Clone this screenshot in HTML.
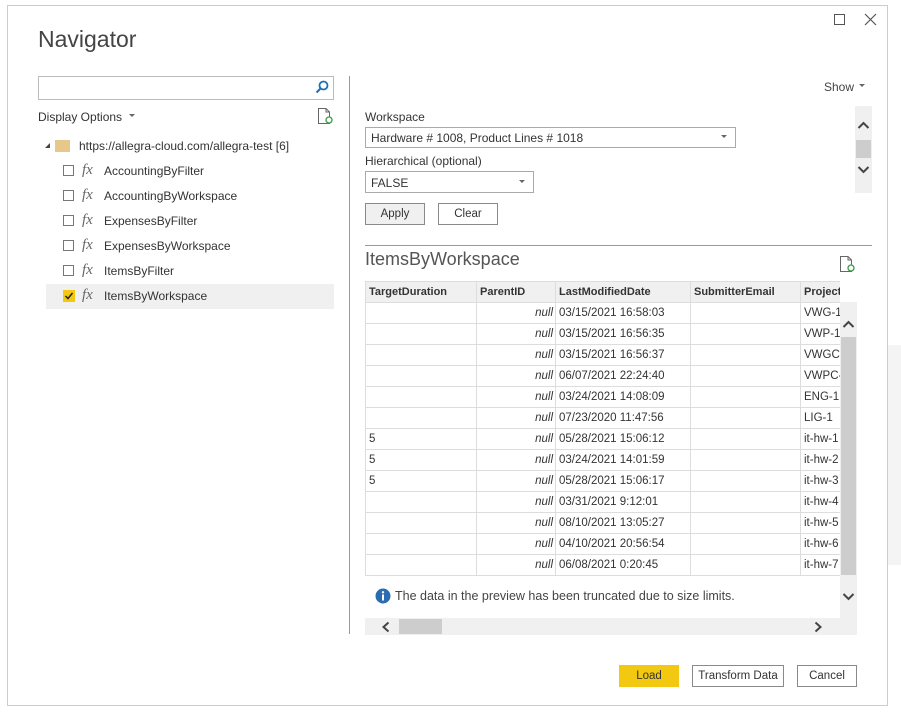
<!DOCTYPE html>
<html><head><meta charset="utf-8"><style>
*{margin:0;padding:0;box-sizing:border-box}
body{width:901px;height:719px;background:#fff;position:relative;overflow:hidden;font-family:"Liberation Sans",sans-serif;font-size:12px;color:#333}
.a{position:absolute}
.cb{position:absolute;width:11px;height:11px;border:1.5px solid #777;background:#fff}
.fx{position:absolute;font-family:"Liberation Serif",serif;font-style:italic;font-size:15px;color:#666}
.it{position:absolute;font-size:12px;color:#333}
.btn{position:absolute;height:22px;border:1px solid #8a8a8a;background:#fff;text-align:center;line-height:20px;font-size:11.5px;color:#333}
table{border-collapse:collapse;table-layout:fixed}
td,th{border:1px solid #ddd;height:21px;padding:0 3px;font-size:11.5px;white-space:nowrap;overflow:hidden;text-align:left;color:#333}
th{background:#f0f0f0;font-weight:bold;font-size:11px}
td.n{text-align:right;font-style:italic;padding-right:2px}
</style></head><body>
<div class="a" style="left:888px;top:345px;width:13px;height:220px;background:#f4f4f4"></div>
<div class="a" style="left:7px;top:5px;width:881px;height:701px;border:1px solid #ccc;background:#fff"></div>
<div class="a" style="left:38px;top:26px;font-size:23px;color:#444">Navigator</div>
<div class="a" style="left:834px;top:14px;width:11px;height:11px;border:1px solid #555"></div>
<svg class="a" style="left:864px;top:13px" width="13" height="13"><path d="M1 1L12 12M12 1L1 12" stroke="#555" stroke-width="1.2"/></svg>
<div class="a" style="left:38px;top:76px;width:296px;height:24px;border:1px solid #bbb"></div>
<svg class="a" style="left:315px;top:80px" width="14" height="15"><circle cx="8.5" cy="5.5" r="4" fill="none" stroke="#1e6fb5" stroke-width="1.8"/><path d="M5.5 8.5L1.5 12.5" stroke="#1e6fb5" stroke-width="2"/></svg>
<div class="a" style="left:38px;top:110px;font-size:12px;color:#333">Display Options</div>
<div class="a" style="left:129px;top:114px;border:3px solid transparent;border-top:3px solid #666"></div>
<svg class="a" style="left:317px;top:107px" width="17" height="18"><path d="M1.5 1.5H9L12.5 5V16.5H1.5Z" fill="none" stroke="#666"/><path d="M9 1.5V5H12.5" fill="none" stroke="#666"/><circle cx="12" cy="13" r="3" fill="#fff" stroke="#3a9a4a" stroke-width="1.3"/></svg>
<div class="a" style="left:45px;top:143px;border-left:5px solid transparent;border-bottom:5px solid #444"></div>
<div class="a" style="left:55px;top:140px;width:15px;height:12px;background:#e8c88a"></div>
<div class="it" style="left:79px;top:139px">https://allegra-cloud.com/allegra-test [6]</div>
<div class="a" style="left:46px;top:284px;width:288px;height:25px;background:#f0f0f0"></div>
<div class="cb" style="left:63px;top:165px"></div><div class="fx" style="left:82px;top:162px">fx</div><div class="it" style="left:104px;top:164px">AccountingByFilter</div>
<div class="cb" style="left:63px;top:190px"></div><div class="fx" style="left:82px;top:187px">fx</div><div class="it" style="left:104px;top:189px">AccountingByWorkspace</div>
<div class="cb" style="left:63px;top:215px"></div><div class="fx" style="left:82px;top:212px">fx</div><div class="it" style="left:104px;top:214px">ExpensesByFilter</div>
<div class="cb" style="left:63px;top:240px"></div><div class="fx" style="left:82px;top:237px">fx</div><div class="it" style="left:104px;top:239px">ExpensesByWorkspace</div>
<div class="cb" style="left:63px;top:265px"></div><div class="fx" style="left:82px;top:262px">fx</div><div class="it" style="left:104px;top:264px">ItemsByFilter</div>
<div class="a" style="left:63px;top:290px;width:12px;height:12px;background:#f2c811"></div>
<svg class="a" style="left:63px;top:290px" width="12" height="12"><path d="M2.5 6L5 8.5L9.5 3" fill="none" stroke="#222" stroke-width="1.5"/></svg>
<div class="fx" style="left:82px;top:287px">fx</div><div class="it" style="left:104px;top:289px">ItemsByWorkspace</div>

<div class="a" style="left:349px;top:76px;width:1px;height:558px;background:#999"></div>
<div class="a" style="left:824px;top:80px;font-size:12px;color:#444">Show</div>
<div class="a" style="left:859px;top:84px;border:3px solid transparent;border-top:3px solid #666"></div>

<div class="a" style="left:365px;top:110px;font-size:12px">Workspace</div>
<div class="a" style="left:365px;top:127px;width:371px;height:21px;border:1px solid #aaa"></div>
<div class="a" style="left:371px;top:131px;font-size:12px">Hardware # 1008, Product Lines # 1018</div>
<div class="a" style="left:721px;top:135px;border:3px solid transparent;border-top:3px solid #666"></div>
<div class="a" style="left:365px;top:154px;font-size:12px">Hierarchical (optional)</div>
<div class="a" style="left:365px;top:171px;width:169px;height:22px;border:1px solid #aaa"></div>
<div class="a" style="left:371px;top:176px;font-size:12px">FALSE</div>
<div class="a" style="left:519px;top:180px;border:3px solid transparent;border-top:3px solid #666"></div>
<div class="btn" style="left:365px;top:203px;width:60px;background:#f0f0f0">Apply</div>
<div class="btn" style="left:438px;top:203px;width:60px">Clear</div>
<div class="a" style="left:855px;top:106px;width:17px;height:87px;background:#f0f0f0"></div>
<div class="a" style="left:856px;top:140px;width:15px;height:18px;background:#cdcdcd"></div>
<svg class="a" style="left:857px;top:120px" width="13" height="10"><path d="M1.5 8L6.5 3L11.5 8" fill="none" stroke="#444" stroke-width="2"/></svg>
<svg class="a" style="left:857px;top:165px" width="13" height="10"><path d="M1.5 2L6.5 7L11.5 2" fill="none" stroke="#444" stroke-width="2"/></svg>

<div class="a" style="left:365px;top:245px;width:507px;height:1px;background:#999"></div>
<div class="a" style="left:365px;top:249px;font-size:18px;color:#555">ItemsByWorkspace</div>
<svg class="a" style="left:839px;top:255px" width="17" height="18"><path d="M1.5 1.5H9L12.5 5V16.5H1.5Z" fill="none" stroke="#666"/><path d="M9 1.5V5H12.5" fill="none" stroke="#666"/><circle cx="12" cy="13" r="3" fill="#fff" stroke="#3a9a4a" stroke-width="1.3"/></svg>

<div class="a" style="left:365px;top:281px;width:475px;height:295px;overflow:hidden">
<table style="width:520px"><colgroup><col style="width:111px"><col style="width:79px"><col style="width:135px"><col style="width:110px"><col style="width:85px"></colgroup>
<tr><th>TargetDuration</th><th>ParentID</th><th>LastModifiedDate</th><th>SubmitterEmail</th><th>ProjectSpecific</th></tr>
<tr><td></td><td class="n">null</td><td>03/15/2021 16:58:03</td><td></td><td>VWG-1</td></tr>
<tr><td></td><td class="n">null</td><td>03/15/2021 16:56:35</td><td></td><td>VWP-1</td></tr>
<tr><td></td><td class="n">null</td><td>03/15/2021 16:56:37</td><td></td><td>VWGC-1</td></tr>
<tr><td></td><td class="n">null</td><td>06/07/2021 22:24:40</td><td></td><td>VWPC-1</td></tr>
<tr><td></td><td class="n">null</td><td>03/24/2021 14:08:09</td><td></td><td>ENG-1</td></tr>
<tr><td></td><td class="n">null</td><td>07/23/2020 11:47:56</td><td></td><td>LIG-1</td></tr>
<tr><td>5</td><td class="n">null</td><td>05/28/2021 15:06:12</td><td></td><td>it-hw-1</td></tr>
<tr><td>5</td><td class="n">null</td><td>03/24/2021 14:01:59</td><td></td><td>it-hw-2</td></tr>
<tr><td>5</td><td class="n">null</td><td>05/28/2021 15:06:17</td><td></td><td>it-hw-3</td></tr>
<tr><td></td><td class="n">null</td><td>03/31/2021 9:12:01</td><td></td><td>it-hw-4</td></tr>
<tr><td></td><td class="n">null</td><td>08/10/2021 13:05:27</td><td></td><td>it-hw-5</td></tr>
<tr><td></td><td class="n">null</td><td>04/10/2021 20:56:54</td><td></td><td>it-hw-6</td></tr>
<tr><td></td><td class="n">null</td><td>06/08/2021 0:20:45</td><td></td><td>it-hw-7</td></tr>
</table></div>
<div class="a" style="left:840px;top:302px;width:17px;height:316px;background:#f0f0f0"></div>
<div class="a" style="left:841px;top:337px;width:15px;height:238px;background:#cdcdcd"></div>
<svg class="a" style="left:842px;top:319px" width="13" height="10"><path d="M1.5 8L6.5 3L11.5 8" fill="none" stroke="#444" stroke-width="2"/></svg>
<svg class="a" style="left:842px;top:592px" width="13" height="10"><path d="M1.5 2L6.5 7L11.5 2" fill="none" stroke="#444" stroke-width="2"/></svg>
<svg class="a" style="left:375px;top:588px" width="16" height="16"><circle cx="8" cy="8" r="7.5" fill="#2b6cb0"/><rect x="7" y="6.5" width="2" height="6" fill="#fff"/><circle cx="8" cy="4.3" r="1.2" fill="#fff"/></svg>
<div class="a" style="left:395px;top:589px;font-size:12.5px;color:#444">The data in the preview has been truncated due to size limits.</div>
<div class="a" style="left:365px;top:618px;width:492px;height:17px;background:#f0f0f0"></div>
<div class="a" style="left:399px;top:619px;width:43px;height:15px;background:#cdcdcd"></div>
<svg class="a" style="left:381px;top:621px" width="10" height="12"><path d="M7.5 1.5L2.5 6L7.5 10.5" fill="none" stroke="#444" stroke-width="2"/></svg>
<svg class="a" style="left:813px;top:621px" width="10" height="12"><path d="M2.5 1.5L7.5 6L2.5 10.5" fill="none" stroke="#444" stroke-width="2"/></svg>

<div class="btn" style="left:619px;top:665px;width:60px;background:#f2c811;border-color:#f2c811">Load</div>
<div class="btn" style="left:692px;top:665px;width:92px">Transform Data</div>
<div class="btn" style="left:797px;top:665px;width:60px">Cancel</div>
</body></html>
